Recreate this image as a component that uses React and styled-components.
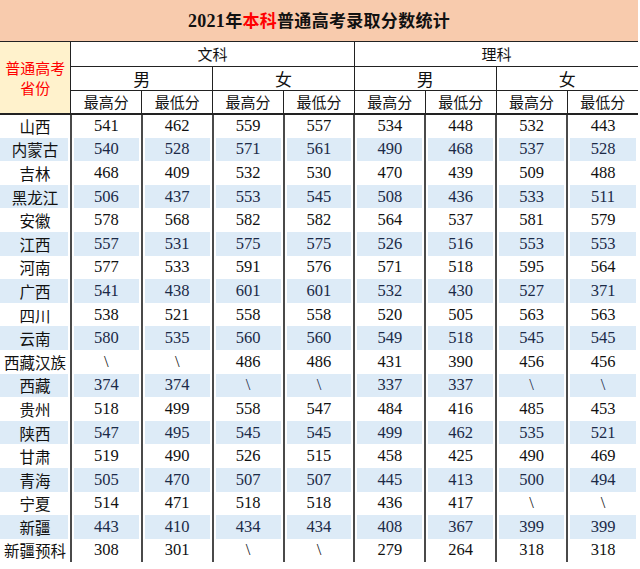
import React from "react"
import styled, { createGlobalStyle } from "styled-components"

const GlobalStyle = createGlobalStyle`
  body {
    margin: 0;
    background: #fff;
    font-family: "Noto Sans CJK SC", "Noto Sans", sans-serif;
  }
`

const Table = styled.table`
  width: 638px;
  table-layout: fixed;
  border-collapse: collapse;
  border-spacing: 0;
  color: #111;
  line-height: 18px;
`

const TitleCell = styled.th`
  height: 41px;
  padding: 0;
  background: #f8cbad;
  border-bottom: 1px solid #222;
  font-size: 17px;
  font-weight: 700;
  text-align: center;
  letter-spacing: 0.3px;
  font-family: "Noto Sans CJK SC", sans-serif;
`

const Year = styled.span`
  font-family: "Liberation Serif", "Noto Sans CJK SC", serif;
  font-size: 18px;
`

const Red = styled.span`
  color: #ff0000;
`

const CornerCell = styled.th`
  background: #fff2cc;
  color: #ff0000;
  font-size: 15px;
  font-weight: 400;
  line-height: 20px;
  padding: 0;
  border-right: 1px solid #222;
  border-bottom: 2px solid #222;
`

const HeadCell = styled.th`
  height: ${p => p.$h}px;
  padding: 0;
  font-weight: 400;
  font-size: ${p => p.$size}px;
  text-align: center;
  border-bottom: ${p => (p.$last ? "2px" : "1px")} solid #222;
  border-left: 1px solid #222;
  ${p => p.$first && "border-left: none;"}
`

const Row = styled.tr`
  height: 23.6px;
  background: ${p => (p.$alt ? "#ddebf7" : "#fff")};
`

const NameCell = styled.td`
  padding: 0;
  text-align: center;
  font-size: 15.5px;
  color: #111;
  white-space: nowrap;
  box-shadow: inset -2px 0 0 #fff;
`

const NumCell = styled.td`
  padding: 0;
  text-align: center;
  font-family: "Liberation Serif", "Times New Roman", serif;
  font-size: 16.5px;
  color: ${p => (p.$alt ? "#1b2a47" : "#111")};
  border-left: 2px solid #4a4a4a;
  box-shadow: inset 2px 0 0 #fff, inset -2px 0 0 #fff;
`

const rows = [
  ["山西", 541, 462, 559, 557, 534, 448, 532, 443],
  ["内蒙古", 540, 528, 571, 561, 490, 468, 537, 528],
  ["吉林", 468, 409, 532, 530, 470, 439, 509, 488],
  ["黑龙江", 506, 437, 553, 545, 508, 436, 533, 511],
  ["安徽", 578, 568, 582, 582, 564, 537, 581, 579],
  ["江西", 557, 531, 575, 575, 526, 516, 553, 553],
  ["河南", 577, 533, 591, 576, 571, 518, 595, 564],
  ["广西", 541, 438, 601, 601, 532, 430, 527, 371],
  ["四川", 538, 521, 558, 558, 520, 505, 563, 563],
  ["云南", 580, 535, 560, 560, 549, 518, 545, 545],
  ["西藏汉族", "\\", "\\", 486, 486, 431, 390, 456, 456],
  ["西藏", 374, 374, "\\", "\\", 337, 337, "\\", "\\"],
  ["贵州", 518, 499, 558, 547, 484, 416, 485, 453],
  ["陕西", 547, 495, 545, 545, 499, 462, 535, 521],
  ["甘肃", 519, 490, 526, 515, 458, 425, 490, 469],
  ["青海", 505, 470, 507, 507, 445, 413, 500, 494],
  ["宁夏", 514, 471, 518, 518, 436, 417, "\\", "\\"],
  ["新疆", 443, 410, 434, 434, 408, 367, 399, 399],
  ["新疆预科", 308, 301, "\\", "\\", 279, 264, 318, 318],
]

export default function App() {
  const subHeads = ["最高分", "最低分", "最高分", "最低分", "最高分", "最低分", "最高分", "最低分"]
  return (
    <>
      <GlobalStyle />
      <Table>
        <colgroup>
          {Array.from({ length: 9 }).map((_, i) => <col key={i} />)}
        </colgroup>
        <thead>
          <tr>
            <TitleCell colSpan={9}>
              <Year>2021</Year>年<Red>本科</Red>普通高考录取分数统计
            </TitleCell>
          </tr>
          <tr>
            <CornerCell rowSpan={3}>普通高考<br />省份</CornerCell>
            <HeadCell $h={24} $size={15} $first colSpan={4}>文科</HeadCell>
            <HeadCell $h={24} $size={15} colSpan={4}>理科</HeadCell>
          </tr>
          <tr>
            <HeadCell $h={23} $size={17} $first colSpan={2}>男</HeadCell>
            <HeadCell $h={23} $size={17} colSpan={2}>女</HeadCell>
            <HeadCell $h={23} $size={17} colSpan={2}>男</HeadCell>
            <HeadCell $h={23} $size={17} colSpan={2}>女</HeadCell>
          </tr>
          <tr>
            {subHeads.map((h, i) => (
              <HeadCell key={i} $h={22} $size={15} $first={i === 0} $last>{h}</HeadCell>
            ))}
          </tr>
        </thead>
        <tbody>
          {rows.map((r, i) => (
            <Row key={r[0]} $alt={i % 2 === 1}>
              <NameCell>{r[0]}</NameCell>
              {r.slice(1).map((v, j) => (
                <NumCell key={j} $alt={i % 2 === 1}>{v}</NumCell>
              ))}
            </Row>
          ))}
        </tbody>
      </Table>
    </>
  )
}
